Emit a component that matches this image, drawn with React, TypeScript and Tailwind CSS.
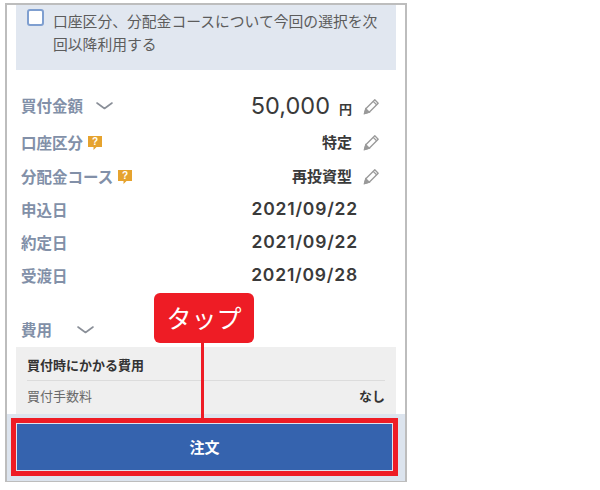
const font = { fontFamily: '"Noto Sans CJK JP", "Liberation Sans", sans-serif' };

function Pencil() {
  return (
    <svg width="17" height="17" viewBox="0 0 17 17" fill="none" stroke="#9a9a9a" strokeWidth="1.3">
      <path d="M1.5 15.5 L2.8 10.8 L11.8 1.8 L15.2 5.2 L6.2 14.2 Z" strokeLinejoin="round" />
      <path d="M10.2 3.4 L13.6 6.8" />
      <path d="M1.5 15.5 L2.8 10.8 L6.2 14.2 Z" fill="#9a9a9a" />
    </svg>
  );
}

function Chevron() {
  return (
    <svg width="17" height="8" viewBox="0 0 17 8" fill="none" stroke="#8a8f98" strokeWidth="1.6">
      <path d="M1 1 L8.5 6.5 L16 1" strokeLinecap="round" strokeLinejoin="round" />
    </svg>
  );
}

function Help() {
  return (
    <svg width="16" height="16" viewBox="0 0 16 16">
      <path d="M1 1 H15 V12 H9.5 L6.5 15 V12 H1 Z" fill="#e6a32e" />
      <text x="8" y="10" textAnchor="middle" fontSize="10" fontWeight="700" fill="#fff" fontFamily="Liberation Sans, sans-serif">?</text>
    </svg>
  );
}

function Row({ label, value, h }: { label: string; value: string; h: string }) {
  return (
    <div className={`flex items-center justify-between pl-[5px] ${h}`}>
      <div className="flex items-center gap-[4px]">
        <span className="text-[15.5px] font-bold text-[#8290a8]">{label}</span>
        <Help />
      </div>
      <div className="flex items-center gap-[11px] pr-[16px]">
        <span className="text-[15px] font-bold text-[#3a3a3a]">{value}</span>
        <Pencil />
      </div>
    </div>
  );
}

function DateRow({ label, value }: { label: string; value: string }) {
  return (
    <div className="flex h-[33px] items-center justify-between pl-[5px] pr-[38px]">
      <span className="text-[15.5px] font-bold text-[#8290a8]">{label}</span>
      <span className="text-[17.5px] font-semibold tracking-[0.8px] text-[#3a3a3a]" style={{ fontFamily: "Inter, sans-serif" }}>{value}</span>
    </div>
  );
}

export default function App() {
  return (
    <div className="h-[490px] w-[600px] bg-white" style={font}>
      <div className="relative ml-[5px] mt-[3px] flex h-[479px] w-[402px] flex-col border-2 border-b-[1px] border-[#bdbdbd] bg-white">
        <div className="mx-[9px] flex h-[65px] shrink-0 gap-[9px] bg-[#e1e7f0] pl-[11px] pr-[8px] pt-[4px]">
          <div className="h-[17px] w-[17px] shrink-0 rounded-[3px] border-2 border-[#7f9fd0] bg-white" />
          <p className="text-[14.8px] leading-[23px] text-[#5c5c5c]">口座区分、分配金コースについて今回の選択を次回以降利用する</p>
        </div>

        <div className="mx-[9px] mt-[18px] flex flex-col">
          <div className="flex h-[37px] items-center justify-between pb-[1px] pl-[5px]">
            <div className="flex items-center gap-[13px]">
              <span className="text-[15.5px] font-bold text-[#8290a8]">買付金額</span>
              <Chevron />
            </div>
            <div className="flex items-center gap-[11px] pr-[16px]">
              <span className="flex items-baseline gap-[9px] text-[#3a3a3a]">
                <span className="text-[23.5px] font-normal" style={{ fontFamily: "Inter, sans-serif" }}>50,000</span>
                <span className="text-[13px] font-bold">円</span>
              </span>
              <Pencil />
            </div>
          </div>
          <Row label="口座区分" value="特定" h="h-[35px]" />
          <Row label="分配金コース" value="再投資型" h="h-[33px]" />
          <DateRow label="申込日" value="2021/09/22" />
          <DateRow label="約定日" value="2021/09/22" />
          <DateRow label="受渡日" value="2021/09/28" />
          <div className="mt-[21px] flex h-[34px] items-center gap-[25px] pl-[5px]">
            <span className="text-[15.5px] font-bold text-[#8290a8]">費用</span>
            <Chevron />
          </div>
        </div>

        <div className="mx-[9px] min-h-0 flex-1 bg-[#efefef] px-[11px]">
          <div className="flex h-[34px] items-center border-b border-[#dcdcdc] pt-[3px] text-[13px] font-bold text-[#333]">買付時にかかる費用</div>
          <div className="flex h-[29px] items-center justify-between text-[13px] text-[#6a6a6a]">
            <span>買付手数料</span>
            <span className="font-bold text-[#333]">なし</span>
          </div>
        </div>

        <div className="flex h-[67px] shrink-0 items-start bg-[#dce4ee] pl-[4px] pr-[7px] pt-[4px]">
          <button className="flex h-[58px] w-full items-center justify-center border-[5px] border-[#ee1c25] p-px">
            <span className="flex h-full w-full items-center justify-center bg-[#3563ae] text-[15px] font-bold text-white">注文</span>
          </button>
        </div>

        <div className="absolute left-[147px] top-[288px] flex flex-col">
          <div className="flex h-[50px] w-[100px] items-center justify-center rounded-[6px] bg-[#ee1c25] text-[25px] text-white">タップ</div>
          <div className="ml-[47px] h-[76px] w-[3px] bg-[#ee1c25]" />
        </div>
      </div>
    </div>
  );
}
